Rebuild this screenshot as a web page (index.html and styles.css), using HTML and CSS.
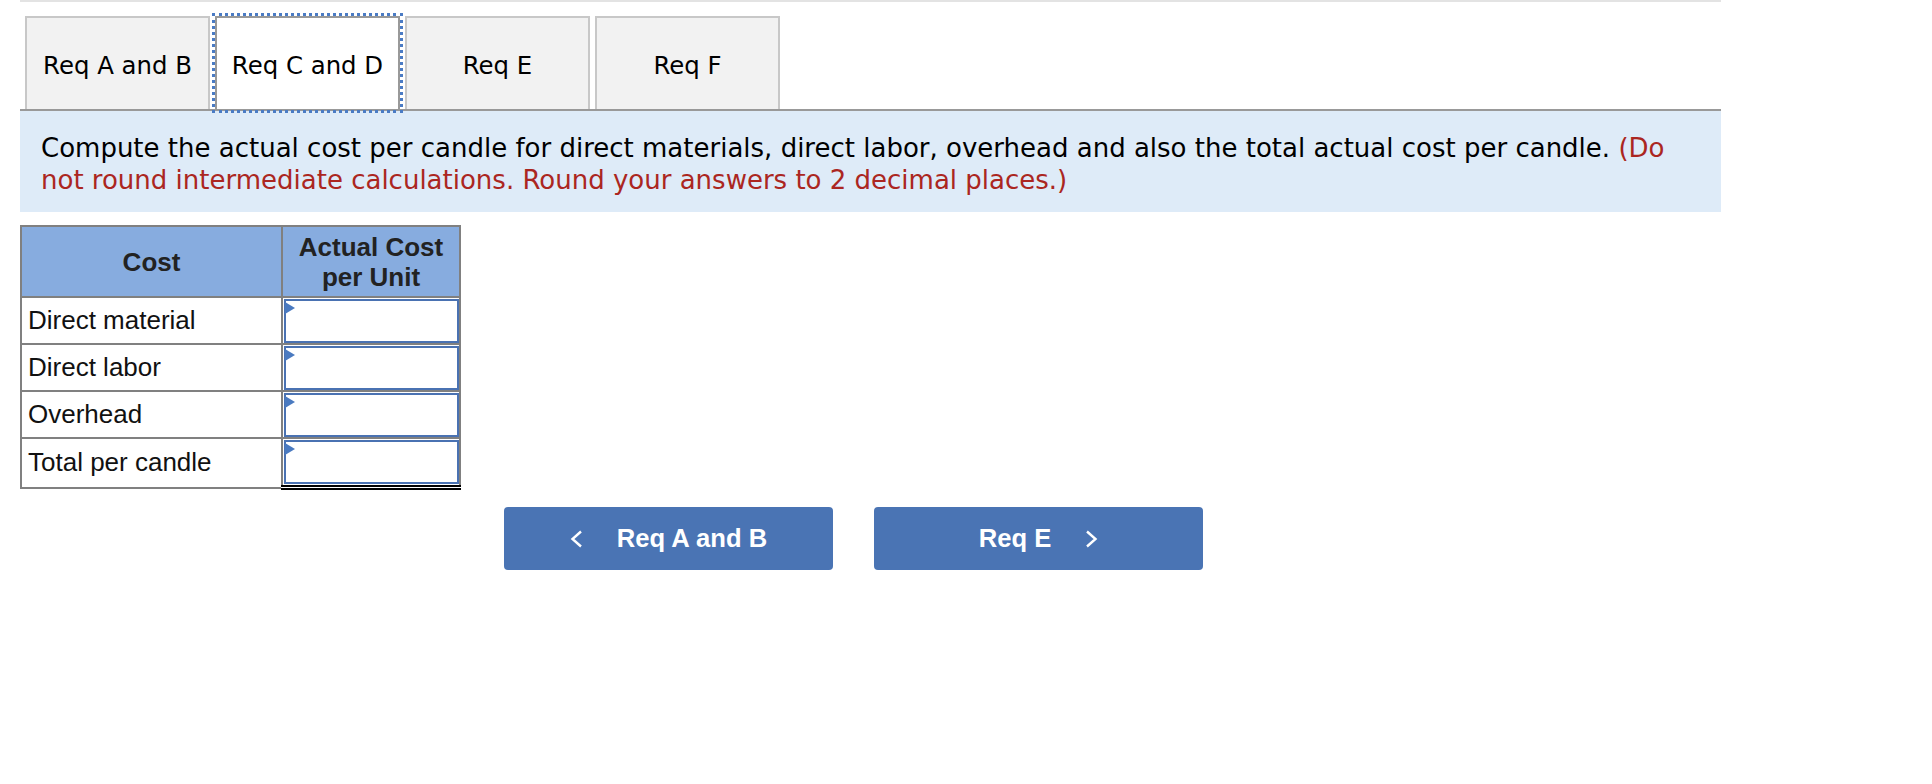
FILE: index.html
```html
<!DOCTYPE html>
<html lang="en">
<head>
    <meta charset="UTF-8">
    <title>Req C and D</title>
    <link rel="stylesheet" href="styles.css">
</head>
<body>

    <div class="question">
        <div class="tabs">
            <div class="tab">Req A and B</div>
            <div class="tab active">Req C and D</div>
            <div class="tab">Req E</div>
            <div class="tab">Req F</div>
        </div>

        <div class="instructions">
            Compute the actual cost per candle for direct materials, direct labor, overhead and also the total actual cost per candle.
            <span class="note">(Do not round intermediate calculations. Round your answers to 2 decimal places.)</span>
        </div>

        <table class="answer-table">
            <tr>
                <th class="col-label">Cost</th>
                <th class="col-value">Actual Cost<br>per Unit</th>
            </tr>
            <tr>
                <td class="label">Direct material</td>
                <td class="value"><div class="field"><input type="text"></div></td>
            </tr>
            <tr>
                <td class="label">Direct labor</td>
                <td class="value"><div class="field"><input type="text"></div></td>
            </tr>
            <tr>
                <td class="label">Overhead</td>
                <td class="value"><div class="field"><input type="text"></div></td>
            </tr>
            <tr class="total">
                <td class="label">Total per candle</td>
                <td class="value"><div class="field"><input type="text"></div></td>
            </tr>
        </table>

        <div class="nav">
            <button type="button" class="nav-btn">
                <svg width="13" height="18" viewBox="0 0 13 18"><polyline points="11,1.5 2.5,9 11,16.5" fill="none" stroke="#fff" stroke-width="2.4"/></svg>
                <span>Req A and B</span>
            </button>
            <button type="button" class="nav-btn">
                <span>Req E</span>
                <svg width="13" height="18" viewBox="0 0 13 18"><polyline points="2,1.5 10.5,9 2,16.5" fill="none" stroke="#fff" stroke-width="2.4"/></svg>
            </button>
        </div>
    </div>

</body>
</html>
```

FILE: styles.css
```css
body {
    margin: 0;
    padding: 0;
    background: #fff;
    color: #000;
}

.question {
    width: 1701px;
    margin-left: 20px;
    border-top: 2px solid #e3e3e3;
    padding-top: 14px;
}

/* Tab strip */
.tabs {
    display: flex;
    gap: 5px;
    padding-left: 5px;
    border-bottom: 2px solid #999;
}

.tab {
    box-sizing: border-box;
    width: 185px;
    height: 93px;
    border: 2px solid #c8c8c8;
    border-bottom: none;
    background-color: #f2f2f2;
    font-family: "DejaVu Sans", Verdana, sans-serif;
    font-size: 24.4px;
    display: flex;
    align-items: center;
    justify-content: center;
    padding-top: 3px;
}

.tab.active {
    background-color: #fff;
    border-color: #999;
    position: relative;
}

/* dotted focus ring round the selected tab */
.tab.active::after {
    content: "";
    position: absolute;
    top: -5px;
    left: -5px;
    right: -5px;
    bottom: -4px;
    border: 3px dotted #4a7bc4;
}

/* Instructions box */
.instructions {
    background-color: #deebf8;
    padding: 22px 21px 16px;
    font-family: "DejaVu Sans", Verdana, sans-serif;
    font-size: 26px;
    line-height: 31.5px;
    color: #000;
}

.note {
    color: #ab2621;
}

/* Answer table */
.answer-table {
    margin-top: 13px;
    border-collapse: collapse;
    border: 2px solid #808080;
    font-family: "Liberation Sans", Arial, sans-serif;
    font-size: 26px;
}

.answer-table th,
.answer-table td {
    border: 2px solid #808080;
}

.answer-table th {
    background-color: #87acdf;
    color: #222;
    height: 69px;
    line-height: 30px;
    padding: 0 4px;
}

.col-label {
    width: 251px;
}

.col-value {
    width: 168px;
}

.label {
    height: 45px;
    padding: 0 6px;
    color: #111;
}

.value {
    padding: 1px 0 0 1px;
}

.field {
    position: relative;
}

.field input {
    display: block;
    box-sizing: border-box;
    width: 100%;
    height: 44px;
    border: 2px solid #4a72b2;
    margin: 0;
    padding: 0 6px;
}

/* little marker in the corner of each answer cell */
.field::before {
    content: "";
    position: absolute;
    left: 1px;
    top: 3px;
    border-top: 6px solid transparent;
    border-bottom: 6px solid transparent;
    border-left: 10px solid #4a7ac0;
}

.total .value {
    border-top: 2px solid #000;
    border-bottom: 5px double #000;
    padding-bottom: 1px;
}

/* Prev / next buttons */
.nav {
    display: flex;
    gap: 41px;
    margin: 17px 0 0 484px;
}

.nav-btn {
    width: 329px;
    height: 63px;
    background-color: #4a74b4;
    color: #fff;
    border: none;
    border-radius: 4px;
    font-family: "Liberation Sans", Arial, sans-serif;
    font-weight: bold;
    font-size: 25.6px;
    display: flex;
    align-items: center;
    justify-content: center;
    gap: 34px;
    padding: 0;
    cursor: pointer;
}

.nav-btn svg {
    display: block;
}
```
